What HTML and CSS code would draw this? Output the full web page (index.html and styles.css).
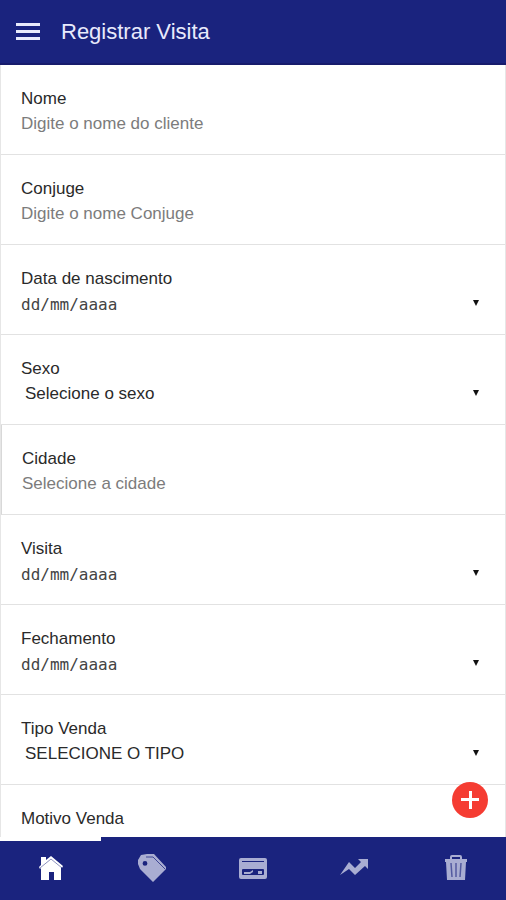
FILE: index.html
```html
<!DOCTYPE html>
<html lang="pt-BR">
<head>
<meta charset="utf-8">
<meta name="viewport" content="width=device-width, initial-scale=1">
<title>Registrar Visita</title>
<link rel="stylesheet" href="styles.css">
</head>
<body>
<header class="topbar">
  <button class="menu" type="button" aria-label="Menu">
    <svg width="24" height="18" viewBox="0 0 24 18" fill="currentColor"><path d="M0 0h24v3H0zM0 7h24v3H0zM0 14h24v3H0z"/></svg>
  </button>
  <h1 class="title">Registrar Visita</h1>
</header>

<main class="content">
  <form class="form">
    <div class="field">
      <label for="nome">Nome</label>
      <input id="nome" type="text" placeholder="Digite o nome do cliente">
    </div>
    <div class="field">
      <label for="conjuge">Conjuge</label>
      <input id="conjuge" type="text" placeholder="Digite o nome Conjuge">
    </div>
    <div class="field picker">
      <label for="nascimento">Data de nascimento</label>
      <input class="date" id="nascimento" type="text" placeholder="dd/mm/aaaa">
    </div>
    <div class="field picker">
      <label for="sexo">Sexo</label>
      <select id="sexo"><option>Selecione o sexo</option></select>
    </div>
    <div class="field outlined">
      <label for="cidade">Cidade</label>
      <input id="cidade" type="text" placeholder="Selecione a cidade">
    </div>
    <div class="field picker">
      <label for="visita">Visita</label>
      <input class="date" id="visita" type="text" placeholder="dd/mm/aaaa">
    </div>
    <div class="field picker">
      <label for="fechamento">Fechamento</label>
      <input class="date" id="fechamento" type="text" placeholder="dd/mm/aaaa">
    </div>
    <div class="field picker">
      <label for="tipo">Tipo Venda</label>
      <select id="tipo"><option>SELECIONE O TIPO</option></select>
    </div>
    <div class="field">
      <label for="motivo">Motivo Venda</label>
      <input id="motivo" type="text">
    </div>
  </form>
</main>

<footer class="bottom">
  <button class="fab" type="button" aria-label="Adicionar">
    <svg width="18" height="18" viewBox="0 0 18 18" fill="currentColor"><path d="M8 0h3v7h7v3h-7v8H8v-8H0V7h8z"/></svg>
  </button>
  <nav class="tabs">
    <a class="tab active" href="#inicio" aria-label="Início">
      <svg width="28" height="28" viewBox="0 0 28 28"><path fill="currentColor" d="M4 3h5v3l5-4 12 10-1 2-1-1v13h-7v-8h-5v8H4V14l-1 1-1-2 2-2z"/><path fill="none" stroke="#1a237e" stroke-opacity=".5" d="M3 14 14 5l11 9"/></svg>
    </a>
    <a class="tab" href="#etiquetas" aria-label="Etiquetas">
      <svg width="28" height="28" viewBox="0 0 28 28"><path fill="currentColor" fill-rule="evenodd" d="M3 1 9 0h7l12 13v2L15 28 2 15 0 10V6zM7 7a2.400 2.400 0 1 0 0 4.800A2.400 2.400 0 0 0 7 7z"/><path fill="none" stroke="#1a237e" stroke-opacity=".75" d="M8 3h7l12 12"/></svg>
    </a>
    <a class="tab" href="#pagamentos" aria-label="Pagamentos">
      <svg width="28" height="28" viewBox="0 0 28 28"><path fill="currentColor" fill-rule="evenodd" d="M2 4h24q2 0 2 2v17q0 2-2 2H2q-2 0-2-2V6q0-2 2-2zM3 7v1h22V7zM4 15q-1 0-1 1v4q0 1 1 1h20q1 0 1-1v-4q0-1-1-1z"/><path fill="currentColor" d="M5 18h6l3-2v2l-3 2H5zM19 17h4v3h-4z"/></svg>
    </a>
    <a class="tab" href="#relatorios" aria-label="Relatórios">
      <svg width="28" height="28" viewBox="0 0 28 28"><path fill="currentColor" d="M0 21 9 8l6 6 6-6-3-3h10v10l-3-3-10 9-6-6z"/></svg>
    </a>
    <a class="tab" href="#lixeira" aria-label="Lixeira">
      <svg width="28" height="28" viewBox="0 0 28 28"><path fill="currentColor" fill-rule="evenodd" d="M9 5V3q0-2 2-2h8q2 0 2 2v2h5v3h-1l-1 18H6L5 8H4V5zM11 5h8V3h-8z"/><path fill="none" stroke="#1a237e" stroke-opacity=".6" stroke-width="1.500" d="M10 9l1 14M15 9v14M20 9l-1 14"/></svg>
    </a>
  </nav>
</footer>
</body>
</html>
```
FILE: styles.css
```css
* {
  box-sizing: border-box;
}

body {
  margin: 0;
  height: 100vh;
  display: flex;
  flex-direction: column;
  background: #fff;
  color: #2a2a2a;
  font-family: "Liberation Sans", Arial, sans-serif;
  font-size: 17px;
}

button {
  border: 0;
  padding: 0;
  background: none;
  color: inherit;
}

svg {
  display: block;
}

.topbar {
  flex: none;
  display: flex;
  align-items: center;
  gap: 21px;
  height: 65px;
  padding: 0 16px;
  border-bottom: 2px solid #171b6c;
  background: #1a237e;
  color: #e8eafc;
}

.title {
  margin: 0;
  font-size: 22px;
  font-weight: 400;
}

.content {
  flex: 1;
  min-height: 0;
  overflow-y: auto;
  scrollbar-width: none;
}

.form {
  border: 1px solid #e6e6e6;
  border-width: 0 1px;
}

.field {
  display: flex;
  flex-direction: column;
  height: 90px;
  padding: 22px 20px 0;
  border-bottom: 1px solid #e2e2e2;
}

.field label {
  line-height: 24px;
}

.field input,
.field select {
  appearance: none;
  width: 100%;
  height: 26px;
  margin: 0;
  padding: 0;
  border: 0;
  outline: 0;
  background: none;
  color: #2a2a2a;
  font: inherit;
}

.field select {
  height: 24px;
  padding-left: 4px;
}

.field input::placeholder {
  color: #7c7c7c;
  opacity: 1;
}

.field .date {
  font-family: "DejaVu Sans Mono", monospace;
  font-size: 16px;
}

.field .date::placeholder {
  color: #444;
}

.picker {
  position: relative;
}

.picker::after {
  content: "";
  position: absolute;
  right: 26px;
  bottom: 28px;
  border: 3px solid transparent;
  border-top: 6px solid #111;
  border-bottom: 0;
}

.outlined {
  border-left: 1px solid #d8d8d8;
}

.bottom {
  flex: none;
  position: relative;
}

.fab {
  position: absolute;
  right: 18px;
  bottom: 82px;
  display: grid;
  place-items: center;
  width: 36px;
  height: 36px;
  border-radius: 50%;
  background: #f53c32;
  color: #fff;
}

.tabs {
  display: grid;
  grid-template-columns: repeat(5, 1fr);
  height: 63px;
  background: #1a237e;
}

.tab {
  display: grid;
  place-items: center;
  border-top: 4px solid #1a237e;
  padding-bottom: 5px;
  color: #a9add2;
}

.active {
  border-top-color: #fff;
  color: #fff;
}
```
